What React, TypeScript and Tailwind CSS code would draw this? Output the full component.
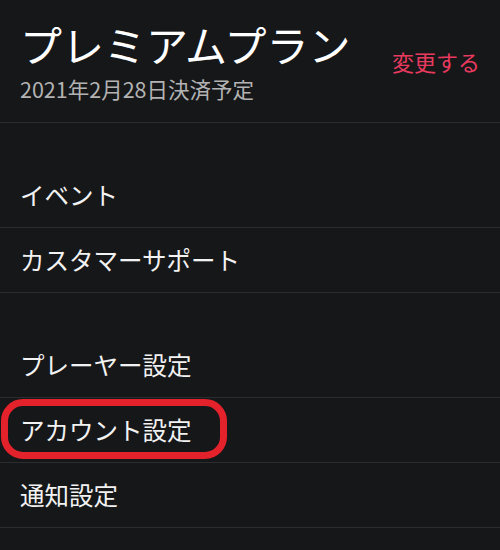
import React from "react";

const font = { fontFamily: '"Noto Sans CJK JP", "Noto Sans", sans-serif' };

function Row({ label, circled }: { label: string; circled?: boolean }) {
  return (
    <div className="relative flex h-[65px] items-center border-b border-[#2c2d30] px-5">
      <span className="text-[24.5px] leading-none text-[#f2f2f2]">{label}</span>
      {circled && (
        <div className="pointer-events-none absolute left-[1px] top-[1px] h-[60px] w-[226px] rounded-[22px] border-[7px] border-[#e3222b]" />
      )}
    </div>
  );
}

export default function App() {
  return (
    <main className="h-[550px] w-full overflow-hidden bg-[#161719]" style={font}>
      <header className="flex h-[123px] items-center justify-between border-b border-[#2c2d30] px-5">
        <div className="flex flex-col">
          <h1 className="text-[42px] font-normal leading-[50px] text-white">プレミアムプラン</h1>
          <p className="mt-[6px] text-[21.5px] leading-[28px] text-[#b3b3b3]">2021年2月28日決済予定</p>
        </div>
        <button className="text-[22px] text-[#e83a5f]">変更する</button>
      </header>

      <section className="pt-[40px]">
        <Row label="イベント" />
        <Row label="カスタマーサポート" />
      </section>

      <section className="pt-[40px]">
        <Row label="プレーヤー設定" />
        <Row label="アカウント設定" circled />
        <Row label="通知設定" />
      </section>
    </main>
  );
}
